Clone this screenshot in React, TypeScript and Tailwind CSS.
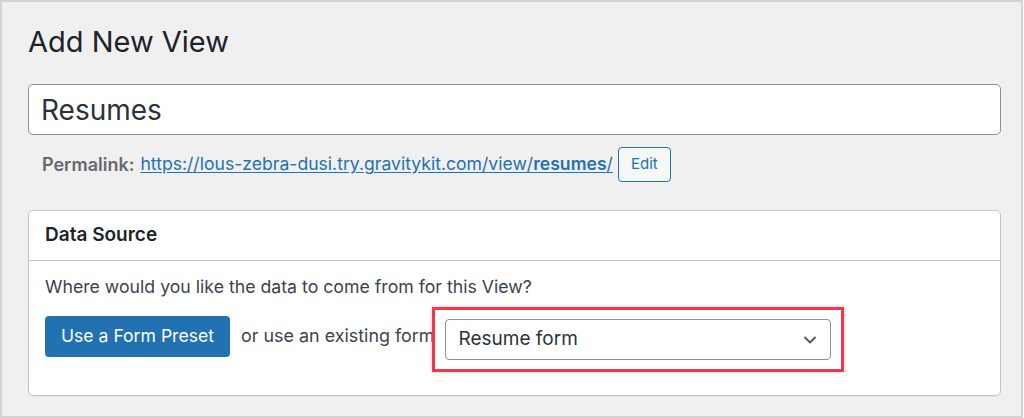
import { ChevronDown } from "lucide-react";

const font = { fontFamily: "Inter, 'Liberation Sans', Arial, sans-serif" };

export default function App() {
  return (
    <div
      className="h-[418px] w-[1023px] border-2 border-[#d2d3d5] bg-[#f0f0f1] pl-[26px] pr-[20px] pt-[22px] text-[#3c434a]"
      style={font}
    >
      <h1 className="text-[29px] leading-[36px] font-normal text-[#1d2327]">Add New View</h1>

      <div className="mt-[24px] flex h-[51px] w-[973px] items-center rounded-[5px] border border-[#8c8f94] bg-white pl-[12px] text-[28px] text-[#2c3338]">
        Resumes
      </div>

      <div className="mt-[12px] flex items-center pl-[14px] text-[17.6px]">
        <span className="text-[18px] font-semibold text-[#646970]">Permalink:</span>
        <a href="#" className="ml-[6px] text-[#2271b1] underline underline-offset-2">
          https://lous-zebra-dusi.try.gravitykit.com/view/<span className="font-semibold">resumes</span>/
        </a>
        <button className="ml-[5px] h-[35px] w-[53px] rounded-[4px] border border-[#2271b1] bg-[#f6f7f7] text-[15px] text-[#2271b1]">
          Edit
        </button>
      </div>

      <div className="mt-[28px] w-[973px] rounded-[5px] border border-[#c3c4c7] bg-white shadow-[0_1px_1px_rgba(0,0,0,0.04)]">
        <div className="flex h-[50px] items-center border-b border-[#c3c4c7] px-[16px] text-[19px] font-semibold text-[#1d2327]">
          Data Source
        </div>
        <div className="px-[16px] pb-[26px] pt-[14px]">
          <p className="text-[17.7px] leading-[24px]">Where would you like the data to come from for this View?</p>
          <div className="mt-[5px] flex items-center">
            <button className="h-[41px] w-[185px] rounded-[4px] bg-[#2271b1] text-[17.6px] text-white">
              Use a Form Preset
            </button>
            <span className="ml-[11px] whitespace-nowrap text-[17.9px]">or use an existing form</span>
            <div className="relative -mb-[3px] -ml-[2px] mt-[3px] border-[3px] border-[#f2364b] px-[10px] py-[9px] shadow-[0_0_4px_rgba(242,54,75,0.3)]">
              <div className="flex h-[41px] w-[386px] items-center justify-between rounded-[4px] border border-[#8c8f94] bg-white pl-[12px] pr-[10px] text-[19px] text-[#2c3338]">
                <span>Resume form</span>
                <ChevronDown className="h-[20px] w-[20px] text-[#50575e]" strokeWidth={2.2} />
              </div>
            </div>
          </div>
        </div>
      </div>
    </div>
  );
}
